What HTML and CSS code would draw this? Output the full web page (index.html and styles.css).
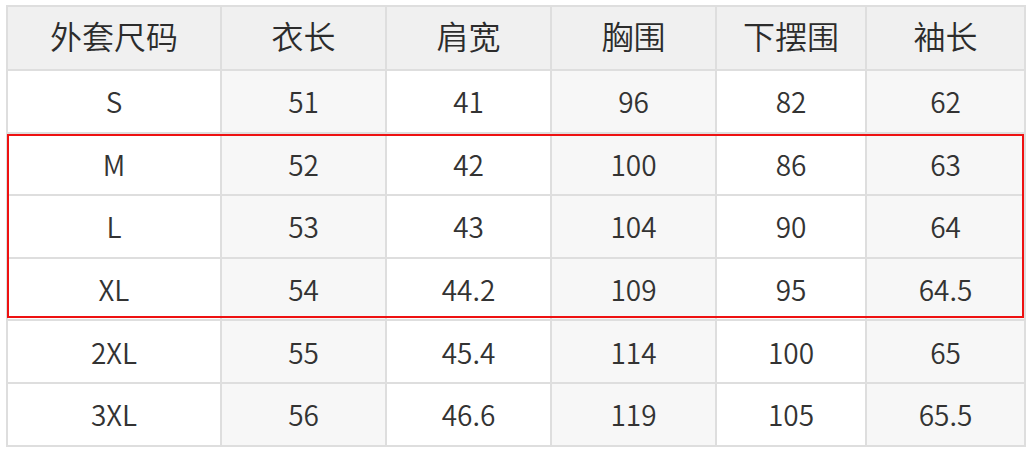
FILE: index.html
```html
<!DOCTYPE html>
<html lang="zh">
<head>
<meta charset="utf-8">
<title>外套尺码</title>
<link rel="stylesheet" href="styles.css">
</head>
<body>
<div class="wrap">
  <table class="size-table">
    <colgroup>
      <col class="c1"><col class="c2"><col class="c3"><col class="c4"><col class="c5"><col class="c6">
    </colgroup>
    <thead>
      <tr><th>外套尺码</th><th>衣长</th><th>肩宽</th><th>胸围</th><th>下摆围</th><th>袖长</th></tr>
    </thead>
    <tbody>
      <tr><td>S</td><td>51</td><td>41</td><td>96</td><td>82</td><td>62</td></tr>
      <tr><td>M</td><td>52</td><td>42</td><td>100</td><td>86</td><td>63</td></tr>
      <tr><td>L</td><td>53</td><td>43</td><td>104</td><td>90</td><td>64</td></tr>
      <tr><td>XL</td><td>54</td><td>44.2</td><td>109</td><td>95</td><td>64.5</td></tr>
      <tr><td>2XL</td><td>55</td><td>45.4</td><td>114</td><td>100</td><td>65</td></tr>
      <tr><td>3XL</td><td>56</td><td>46.6</td><td>119</td><td>105</td><td>65.5</td></tr>
    </tbody>
  </table>
  <div class="highlight"></div>
</div>
</body>
</html>
```

FILE: styles.css
```css
html, body {
  margin: 0;
  padding: 0;
  background: #ffffff;
}
body {
  font-family: "Noto Sans CJK SC", "Noto Sans", sans-serif;
  color: #333333;
}
.wrap {
  position: relative;
  padding: 5px 0 0 6px;
  width: 1018px;
}
.size-table {
  border-collapse: collapse;
  table-layout: fixed;
  width: 1018px;
  border: 2px solid #dcdcdc;
}
.c1 { width: 214px; }
.c2 { width: 165px; }
.c3 { width: 165px; }
.c4 { width: 165px; }
.c5 { width: 150px; }
.c6 { width: 159px; }
.size-table th,
.size-table td {
  border: 2px solid #dedede;
  text-align: center;
  vertical-align: middle;
  padding: 0;
  font-weight: 350;
}
.size-table th {
  height: 64px;
  padding-bottom: 6px;
  box-sizing: border-box;
  font-size: 32px;
  background: #f0f0f0;
  color: #2c2c2c;
}
.size-table td {
  height: 60.6px;
  font-size: 28px;
  color: #333333;
  background: #ffffff;
}
.size-table td:nth-child(2n) {
  background: #f7f7f7;
}
.highlight {
  position: absolute;
  left: 7px;
  top: 134px;
  width: 1013px;
  height: 180px;
  border: 2px solid #ee1111;
}
```
